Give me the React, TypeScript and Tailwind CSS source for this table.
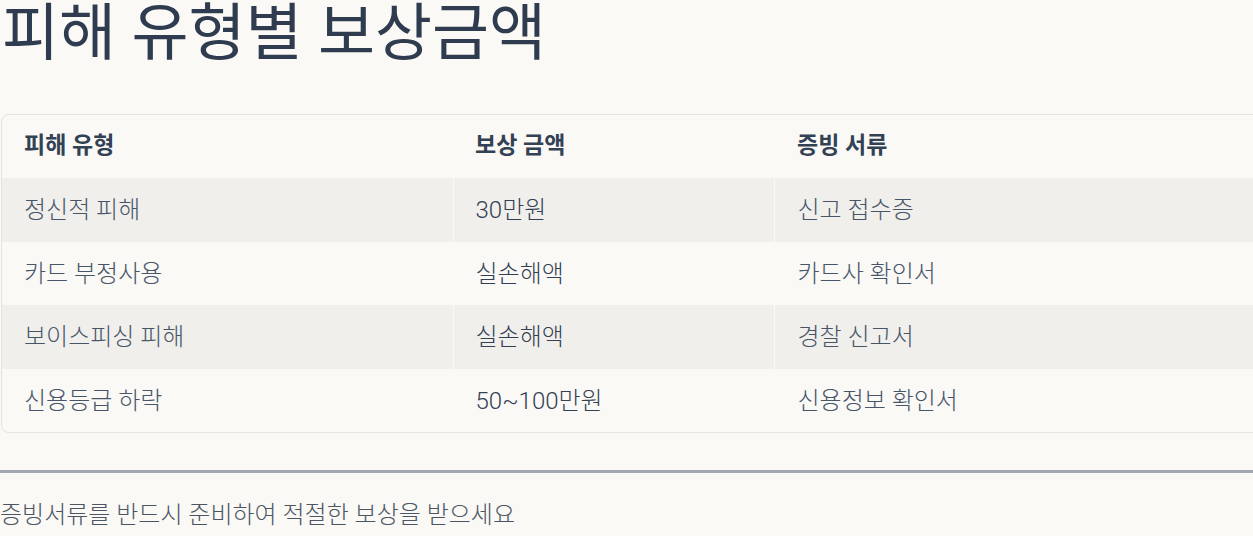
const rows = [
  { type: "정신적 피해", amount: "30만원", doc: "신고 접수증" },
  { type: "카드 부정사용", amount: "실손해액", doc: "카드사 확인서" },
  { type: "보이스피싱 피해", amount: "실손해액", doc: "경찰 신고서" },
  { type: "신용등급 하락", amount: "50~100만원", doc: "신용정보 확인서" },
]

export default function App() {
  return (
    <div
      className="h-[536px] w-[1253px] overflow-hidden bg-[#faf9f6] text-[#334155]"
      style={{ fontFamily: "Roboto, 'Noto Sans CJK KR', sans-serif" }}
    >
      {/* Title */}
      <h1 className="pl-[2px] text-[62px] leading-[68px] font-normal text-[#2f3b4e]">피해 유형별 보상금액</h1>

      {/* Table */}
      <div className="mt-[46px] ml-px w-[1270px] overflow-hidden rounded-lg border border-[#e6e4df]">
        <table className="w-full border-collapse text-left">
          <thead>
            <tr className="h-[63px]">
              <th className="w-[451px] px-[22px] text-[23px] font-bold text-[#334155]">피해 유형</th>
              <th className="w-[321px] px-[22px] text-[23px] font-bold text-[#334155]">보상 금액</th>
              <th className="px-[23px] text-[23px] font-bold text-[#334155]">증빙 서류</th>
            </tr>
          </thead>
          <tbody>
            {rows.map((r, i) => (
              <tr key={r.type} className={i % 2 === 0 ? "h-[64px] bg-[#f0efeb]" : "h-[63px]"}>
                <td className="border-r border-[#faf9f6] px-[22px] text-[24px] font-light text-[#475569]">{r.type}</td>
                <td className="border-r border-[#faf9f6] px-[22px] text-[24px] font-light text-[#334155]">{r.amount}</td>
                <td className="px-[23px] text-[24px] font-light text-[#475569]">{r.doc}</td>
              </tr>
            ))}
          </tbody>
        </table>
      </div>

      <hr className="mt-[37px] h-[3px] border-0 bg-[#a3a8ae]" />

      <p className="mt-[24px] text-[24px] font-light text-[#4b5563]">증빙서류를 반드시 준비하여 적절한 보상을 받으세요</p>
    </div>
  )
}
